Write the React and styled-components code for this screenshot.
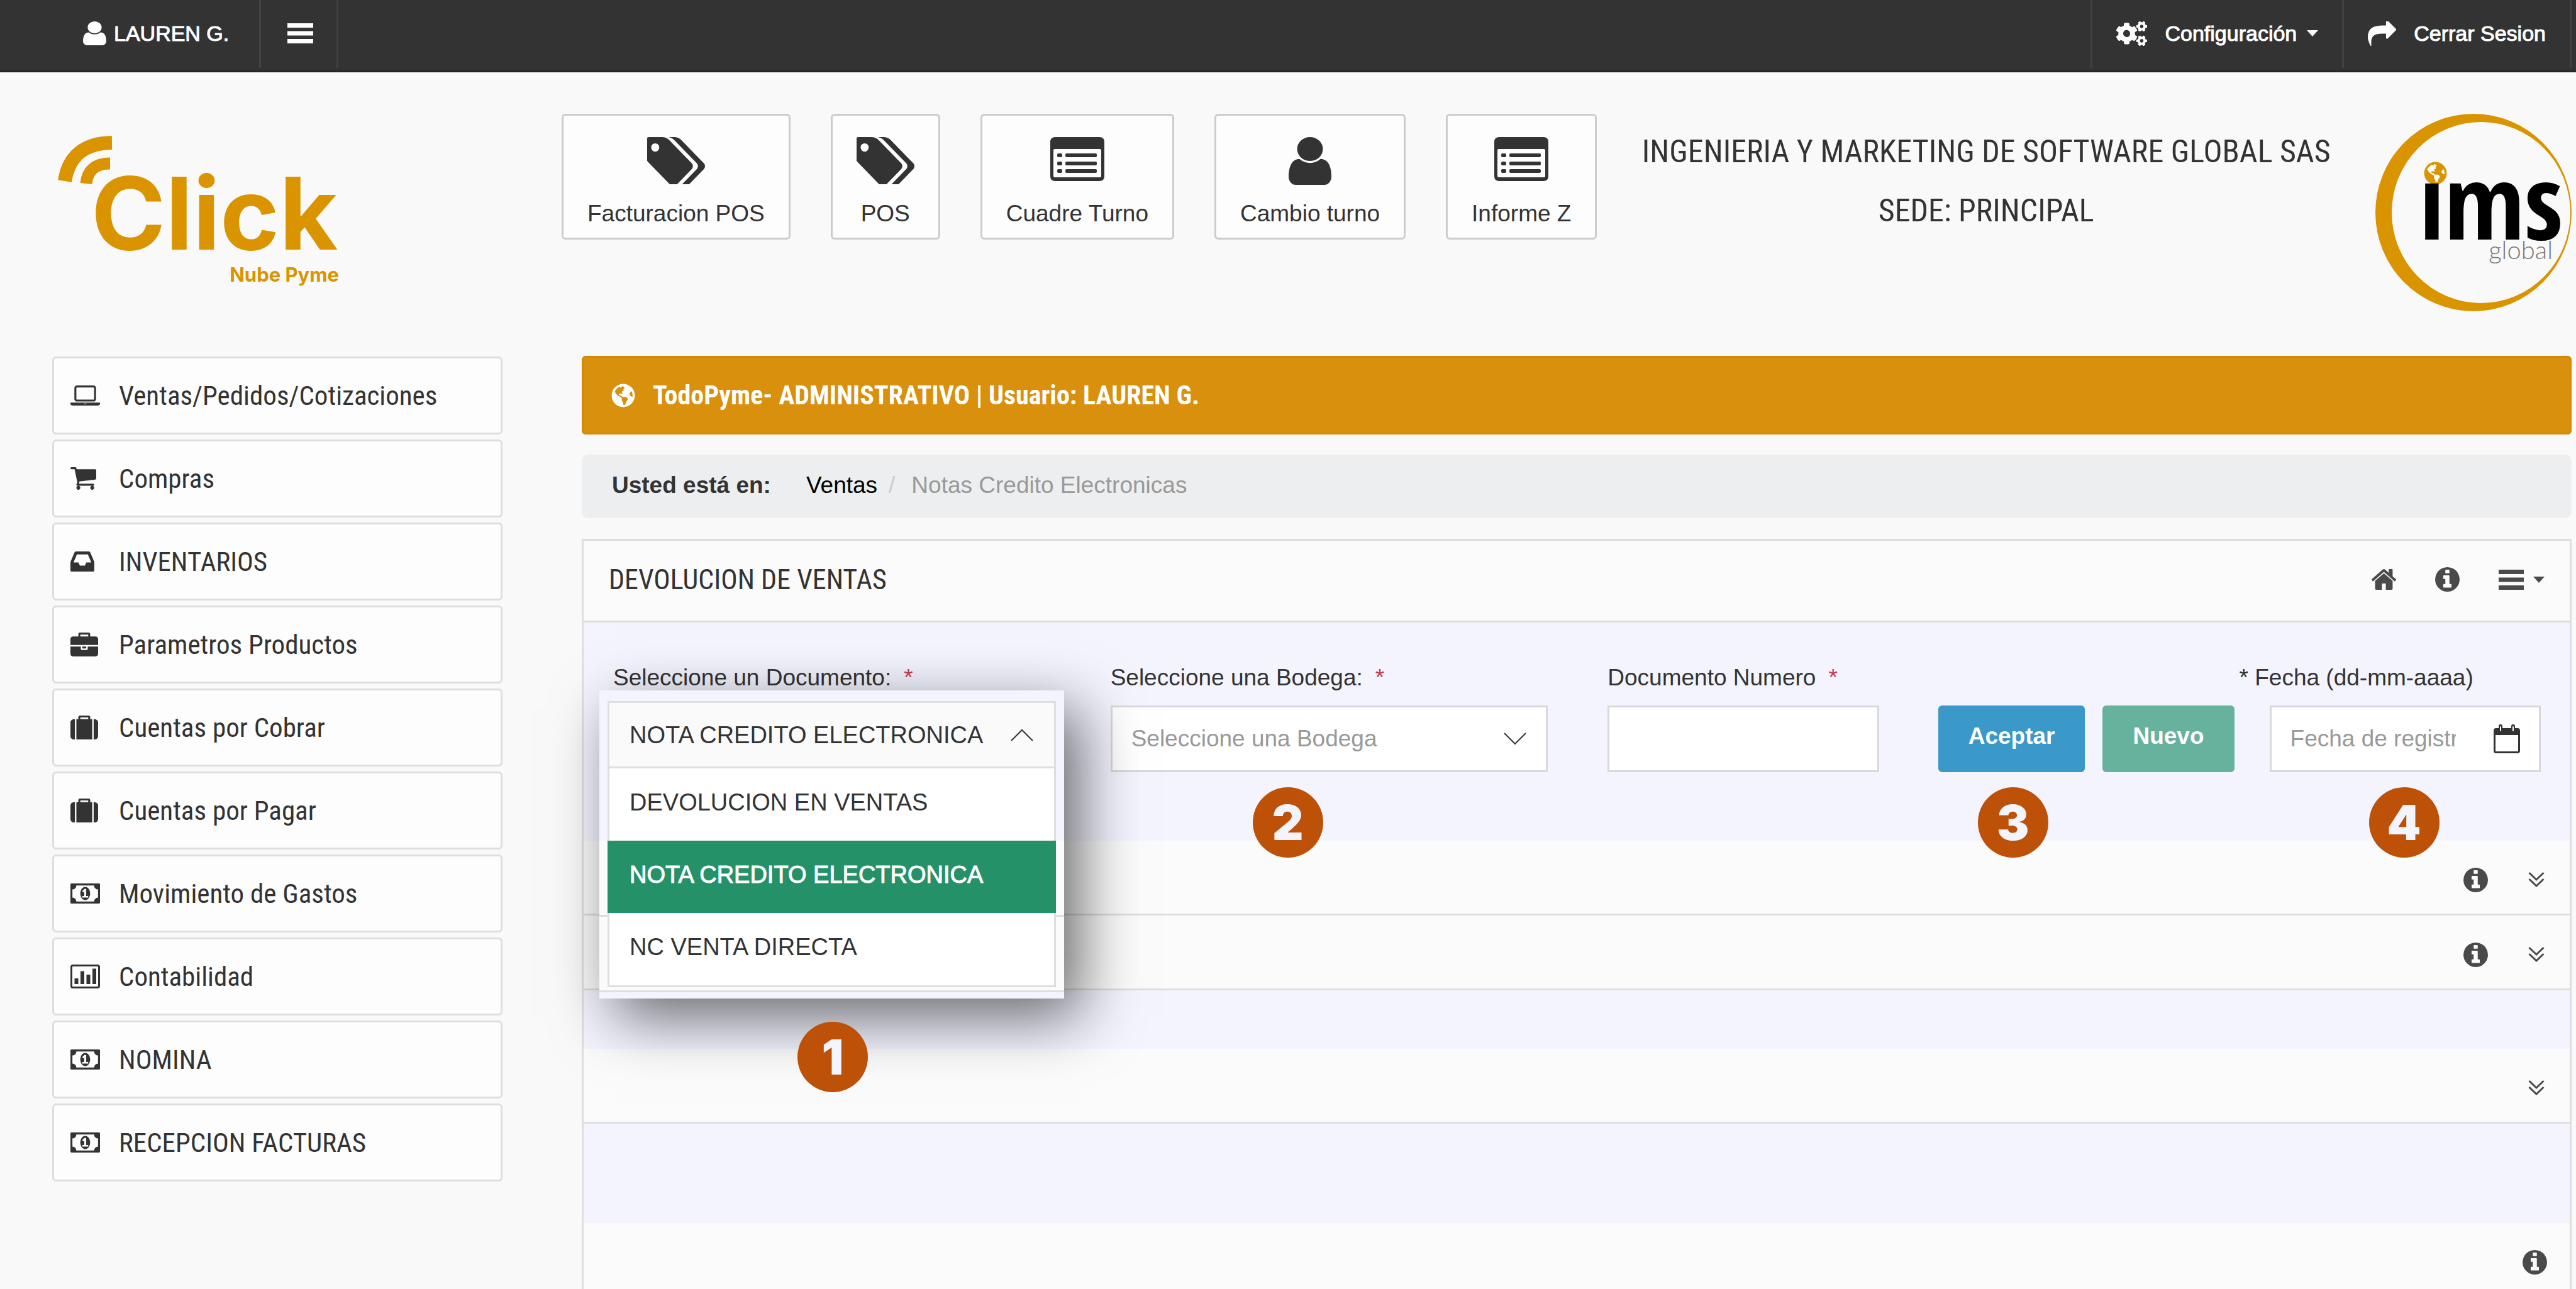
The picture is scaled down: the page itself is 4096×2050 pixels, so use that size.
import React, { useState } from "react";
import styled, { createGlobalStyle } from "styled-components";
import { FaCogs, FaGlobeAmericas } from "react-icons/fa";

const sans = '"Liberation Sans", Arial, sans-serif';
const condensed = '"Roboto Condensed", Roboto, "Liberation Sans", sans-serif';
const line = "#dedede";
const ink = "#333333";
const gold = "#da9400";

const GlobalStyle = createGlobalStyle`
  *, *::before, *::after { box-sizing: border-box; }
  body {
    margin: 0;
    background: #f9f9f9;
    color: ${ink};
    font: 37px/44px ${sans};
  }
  ul { list-style: none; margin: 0; padding: 0; }
  a { color: inherit; text-decoration: none; }
  button, input, select { font: inherit; color: inherit; margin: 0; border-radius: 0; }
  button { cursor: pointer; }
  svg { display: block; flex: none; }
`;

const Page = styled.div`
  display: flex;
  flex-direction: column;
  min-height: 100vh;
`;

/* ---------- icons ---------- */

const Icon = ({ box, w, h, children }) => (
  <svg viewBox={box} width={w} height={h} preserveAspectRatio="none" fill="currentColor" aria-hidden="true">
    {children}
  </svg>
);

const UserIcon = ({ w, h }) => (
  <Icon box="256 128 1280 1536" w={w} h={h}>
    <path d="M1536 1399q0 109-62.5 187t-150.5 78h-854q-88 0-150.5-78t-62.5-187q0-85 8.5-160.5t31.5-152 58.5-131 94-89 134.5-34.5q131 128 313 128t313-128q76 0 134.5 34.5t94 89 58.5 131 31.5 152 8.5 160.5zm-256-887q0 159-112.5 271.5t-271.5 112.5-271.5-112.5-112.5-271.5 112.5-271.5 271.5-112.5 271.5 112.5 112.5 271.5z" />
  </Icon>
);
const BarsIcon = ({ w, h }) => (
  <Icon box="0 0 44 32" w={w} h={h}>
    <path d="M0 0h44v7H0zM0 12.5h44v7H0zM0 25h44v7H0z" />
  </Icon>
);
const CaretIcon = () => (
  <Icon box="0 0 18 10" w={18} h={10}>
    <path d="M0 0h18l-9 10z" />
  </Icon>
);
const ShareIcon = () => (
  <Icon box="0 128 1792 1536" w={45} h={39}>
    <path d="M1792 640q0 26-19 45l-512 512q-19 19-45 19t-45-19-19-45v-256h-224q-98 0-175.5 6t-154 21.5-133 42.5-105.5 69.5-80 101-48.5 138.5-17.5 181q0 55 5 123 0 6 2.5 23.5t2.5 26.5q0 15-8.5 25t-23.5 10q-16 0-28-17-7-9-13-22t-13.5-30-10.5-24q-127-285-127-451 0-199 53-333 162-403 875-403h224v-256q0-26 19-45t45-19 45 19l512 512q19 19 19 45z" />
  </Icon>
);
const TagsIcon = () => (
  <Icon box="0 256 1835 1451" w={92} h={75}>
    <path d="M448 576q0-53-37.5-90.5t-90.5-37.5-90.5 37.5-37.5 90.5 37.5 90.5 90.5 37.5 90.5-37.5 37.5-90.5zm1067 576q0 53-37 90l-491 492q-39 37-91 37-53 0-90-37l-715-716q-38-37-64.5-101t-26.5-117v-416q0-52 38-90t90-38h416q53 0 117 26.5t102 64.5l715 714q37 39 37 91zm384 0q0 53-37 90l-491 492q-39 37-91 37-36 0-59-14t-53-45l470-470q37-37 37-90 0-52-37-91l-715-714q-38-38-102-64.5t-117-26.5h224q53 0 117 26.5t102 64.5l715 714q37 39 37 91z" transform="translate(-64 0)" />
  </Icon>
);
const ListIcon = () => (
  <Icon box="0 0 86 70" w={86} h={70}>
    <path
      fillRule="evenodd"
      d="M8 0h70q8 0 8 8v54q0 8-8 8H8q-8 0-8-8V8q0-8 8-8zM7 19q-2 0-2 2v41q0 2 2 2h72q2 0 2-2V21q0-2-2-2zM13 26h4q2 0 2 2v2q0 2-2 2h-4q-2 0-2-2v-2q0-2 2-2zM13 39h4q2 0 2 2v2q0 2-2 2h-4q-2 0-2-2v-2q0-2 2-2zM13 51h4q2 0 2 2v2q0 2-2 2h-4q-2 0-2-2v-2q0-2 2-2zM26 26h46q2 0 2 2v2q0 2-2 2H26q-2 0-2-2v-2q0-2 2-2zM26 39h46q2 0 2 2v2q0 2-2 2H26q-2 0-2-2v-2q0-2 2-2zM26 51h46q2 0 2 2v2q0 2-2 2H26q-2 0-2-2v-2q0-2 2-2z"
    />
  </Icon>
);
const LaptopIcon = () => (
  <Icon box="0 256 1920 1280" w={47} h={32}>
    <path d="M416 1280q-66 0-113-47t-47-113v-704q0-66 47-113t113-47h1088q66 0 113 47t47 113v704q0 66-47 113t-113 47h-1088zm-32-864v704q0 13 9.5 22.5t22.5 9.5h1088q13 0 22.5-9.5t9.5-22.5v-704q0-13-9.5-22.5t-22.5-9.5h-1088q-13 0-22.5 9.5t-9.5 22.5zm1376 928h160v96q0 40-47 68t-113 28h-1600q-66 0-113-28t-47-68v-96h1760zm-720 96q16 0 16-16t-16-16h-160q-16 0-16 16t16 16h160z" />
  </Icon>
);
const CartIcon = () => (
  <Icon box="64 256 1664 1408" w={41} h={36}>
    <path d="M704 1536q0 52-38 90t-90 38-90-38-38-90 38-90 90-38 90 38 38 90zm896 0q0 52-38 90t-90 38-90-38-38-90 38-90 90-38 90 38 38 90zm128-1088v512q0 24-16.5 42.5t-40.5 21.5l-1044 122q13 60 13 70 0 16-24 64h920q26 0 45 19t19 45-19 45-45 19h-1024q-26 0-45-19t-19-45q0-11 8-31.5t16-36 21.5-40 15.5-29.5l-177-823h-204q-26 0-45-19t-19-45 19-45 45-19h256q16 0 28.5 6.5t19.5 15.5 13 24.5 8 26 5.5 29.5 4.5 26h1201q26 0 45 19t19 45z" />
  </Icon>
);
const InboxIcon = () => (
  <Icon box="128 256 1536 1280" w={38} h={32}>
    <path d="M1151 960h316q-1-3-2.5-8.5t-2.5-7.5l-212-496h-708l-212 496q-1 3-2.5 8.5t-2.5 7.5h316l95 192h320zm513 30v482q0 26-19 45t-45 19h-1408q-26 0-45-19t-19-45v-482q0-62 25-123l238-552q10-25 36.5-42t52.5-17h832q26 0 52.5 17t36.5 42l238 552q25 61 25 123z" />
  </Icon>
);
const BriefcaseIcon = () => (
  <Icon box="0 0 1792 1536" w={44} h={38}>
    <path d="M640 256h512v-128h-512v128zm1152 640v480q0 66-47 113t-113 47h-1472q-66 0-113-47t-47-113v-480h672v160q0 26 19 45t45 19h320q26 0 45-19t19-45v-160h672zm-768 0v128h-256v-128h256zm768-480v384h-1792v-384q0-66 47-113t113-47h352v-160q0-40 28-68t68-28h576q40 0 68 28t28 68v160h352q66 0 113 47t47 113z" />
  </Icon>
);
const SuitcaseIcon = () => (
  <Icon box="0 0 1792 1664" w={44} h={38}>
    <path d="M640 256h512v-128h-512v128zm-352 0v1408h-64q-92 0-158-66t-66-158v-960q0-92 66-158t158-66h64zm1120 0v1408h-1024v-1408h128v-160q0-40 28-68t68-28h576q40 0 68 28t28 68v160h128zm384 224v960q0 92-66 158t-158 66h-64v-1408h64q92 0 158 66t66 158z" />
  </Icon>
);
const MoneyIcon = () => (
  <Icon box="0 256 1920 1280" w={47} h={32}>
    <path
      fillRule="evenodd"
      d="M768 1152h384v-96h-128v-448h-114l-148 137 77 80q42-37 55-57h2v288h-128v96zm512-256q0 70-21 142t-59.5 134-101.5 101-138 39-138-39-101.5-101-59.5-134-21-142 21-142 59.5-134 101.5-101 138-39 138 39 101.5 101 59.5 134 21 142zm512 256v-512q-106 0-181-75t-75-181h-1152q0 106-75 181t-181 75v512q106 0 181 75t75 181h1152q0-106 75-181t181-75zm128-832v1152q0 26-19 45t-45 19h-1792q-26 0-45-19t-19-45v-1152q0-26 19-45t45-19h1792q26 0 45 19t19 45z"
    />
  </Icon>
);
const ChartIcon = () => (
  <Icon box="0 0 47 38" w={47} h={38}>
    <path
      fillRule="evenodd"
      d="M4 0h39q4 0 4 4v30q0 4-4 4H4q-4 0-4-4V4q0-4 4-4zM4 3q-1 0-1 1v30q0 1 1 1h39q1 0 1-1V4q0-1-1-1zM6.5 22h6v9h-6zM16 10.5h6V31h-6zM25.5 16h6v15h-6zM35 6.5h6V31h-6z"
    />
  </Icon>
);
const HomeIcon = () => (
  <Icon box="89 253 1614 1283" w={39} h={33}>
    <path d="M1472 992v480q0 26-19 45t-45 19h-384v-384h-256v384h-384q-26 0-45-19t-19-45v-480q0-1 .5-3t.5-3l575-474 575 474q1 2 1 6zm223-69l-62 74q-8 9-21 11h-3q-13 0-21-7l-692-577-692 577q-12 8-24 7-13-2-21-11l-62-74q-8-10-7-23.5t11-21.5l719-599q32-26 76-26t76 26l244 204v-195q0-14 9-23t23-9h192q14 0 23 9t9 23v408l219 182q10 8 11 21.5t-7 23.5z" />
  </Icon>
);
const InfoIcon = () => (
  <Icon box="128 128 1536 1536" w={39} h={39}>
    <path d="M1152 1376v-160q0-14-9-23t-23-9h-96v-512q0-14-9-23t-23-9h-320q-14 0-23 9t-9 23v160q0 14 9 23t23 9h96v320h-96q-14 0-23 9t-9 23v160q0 14 9 23t23 9h448q14 0 23-9t9-23zm-128-896v-160q0-14-9-23t-23-9h-192q-14 0-23 9t-9 23v160q0 14 9 23t23 9h192q14 0 23-9t9-23zm640 416q0 209-103 385.5t-279.5 279.5-385.5 103-385.5-103-279.5-279.5-103-385.5 103-385.5 279.5-279.5 385.5-103 385.5 103 279.5 279.5 103 385.5z" />
  </Icon>
);
const Stroke = ({ box, w, h, d, width }) => (
  <svg viewBox={box} width={w} height={h} fill="none" stroke="currentColor" strokeWidth={width} aria-hidden="true">
    <path d={d} />
  </svg>
);
const DoubleDown = () => <Stroke box="0 0 26 26" w={26} h={26} width={3} d="M1.5 2l11.5 11 11.5-11M1.5 12l11.5 11 11.5-11" />;
const ChevronDown = () => <Stroke box="0 0 38 22" w={38} h={22} width={2} d="M2 2l17 17 17-17" />;
const ChevronUp = () => <Stroke box="0 0 38 22" w={38} h={22} width={2} d="M2 20l17-17 17 17" />;
const CalendarIcon = () => (
  <Icon box="0 0 42 46" w={42} h={46}>
    <path
      fillRule="evenodd"
      d="M4 6h4V3q0-3 3-3t3 3v3h14V3q0-3 3-3t3 3v3h4q4 0 4 4v32q0 4-4 4H4q-4 0-4-4V10q0-4 4-4zM3 17v25q0 1 1 1h34q1 0 1-1V17zM10 4v6q0 1 1 1t1-1V4q0-1-1-1t-1 1zM30 4v6q0 1 1 1t1-1V4q0-1-1-1t-1 1z"
    />
  </Icon>
);

const ClickLogo = () => (
  <svg viewBox="0 0 460 250" width={460} height={250} role="img" aria-label="Click Nube Pyme">
    <g fill="none" stroke={gold}>
      <path strokeWidth="22" d="M13 76Q22 16 88 15" />
      <path strokeWidth="19" d="M47 80Q50 48 85 48" />
    </g>
    <text x="55" y="185" fill={gold} fontFamily="Inter, sans-serif" fontWeight="700" fontSize="160">
      Click
    </text>
    <text x="449" y="236" textAnchor="end" fill={gold} fontFamily="Inter, sans-serif" fontWeight="700" fontSize="31">
      Nube Pyme
    </text>
  </svg>
);

const ImsLogo = () => (
  <svg viewBox="0 0 312 314" width={312} height={314} role="img" aria-label="ims global">
    <path
      fill={gold}
      fillRule="evenodd"
      d="M156 0a156 157 0 1 1 0 314a156 157 0 1 1 0-314zM168 13a142 144 0 1 0 0 288a142 144 0 1 0 0-288z"
    />
    <g color={gold}>
      <FaGlobeAmericas x="77" y="76" width="30" height="30" />
    </g>
    <text x="70" y="200" fill="#000" fontFamily='"Open Sans Condensed", "Roboto Condensed", sans-serif' fontWeight="700" fontSize="164">
      ıms
    </text>
    <text x="282" y="231" textAnchor="end" fill="#777" fontFamily="Lato, sans-serif" fontWeight="300" fontSize="40">
      global
    </text>
  </svg>
);

/* ---------- top bar ---------- */

const TopBar = styled.nav`
  display: flex;
  align-items: flex-start;
  justify-content: space-between;
  height: 115px;
  padding: 0 7px 0 84px;
  background: #333333;
  border-bottom: 3px solid #262626;
  color: #ffffff;
`;
const TopGroup = styled.ul`
  display: flex;
`;
const TopItem = styled.li`
  border-right: 3px solid #424242;
`;
const TopRight = styled(TopGroup)`
  border-left: 3px solid #424242;
`;
const TopLink = styled.a`
  display: flex;
  align-items: center;
  height: 108px;
  padding: 0 ${(p) => p.$pad || 38}px 2px;
  gap: ${(p) => p.$gap || 28}px;
  font-size: 34px;
  -webkit-text-stroke: 1px currentColor;
`;
const TopButton = styled.button`
  display: flex;
  align-items: center;
  height: 108px;
  padding: 0 37px 2px 42px;
  border: 0;
  background: none;
`;
const WithCaret = styled.span`
  display: flex;
  align-items: center;
  gap: 16px;
`;

/* ---------- header ---------- */

const Header = styled.header`
  display: flex;
  align-items: flex-start;
  gap: 64px;
  height: 451px;
  padding: 66px 7px 0 83px;
`;
const Brand = styled.a`
  flex: none;
  width: 746px;
  padding: 31px 0 0 7px;
`;
const Shortcuts = styled.nav`
  display: flex;
  gap: 64px;
`;
const Shortcut = styled.a`
  display: flex;
  flex-direction: column;
  align-items: center;
  justify-content: space-between;
  height: 200px;
  padding: 34px 38px 16px;
  border: 3px solid #cccccc;
  border-radius: 6px;
  background: #fdfdfd;
  white-space: nowrap;
`;
const Company = styled.h1`
  flex: 1;
  margin: 0;
  padding-top: 13px;
  font: 400 50px/94px ${condensed};
  text-align: center;
  white-space: nowrap;
`;

/* ---------- body ---------- */

const Columns = styled.div`
  display: flex;
  flex: 1;
  gap: 126px;
  padding: 0 7px 0 83px;
`;
const Sidebar = styled.nav`
  width: 716px;
  flex: none;
`;
const MenuList = styled.ul`
  display: flex;
  flex-direction: column;
  gap: 8px;
  padding-top: 1px;
`;
const MenuLink = styled.a`
  display: grid;
  grid-template-columns: 47px 1fr;
  align-items: center;
  column-gap: 30px;
  height: 124px;
  padding: 0 26px;
  border: 3px solid ${line};
  border-radius: 6px;
  background: #fdfdfd;
  font-family: ${condensed};
  font-size: 43px;
`;
const Main = styled.main`
  display: flex;
  flex-direction: column;
  flex: 1;
  min-width: 0;
`;
const Banner = styled.div`
  display: flex;
  align-items: center;
  gap: 28px;
  height: 125px;
  padding: 0 44px;
  border: 3px solid #d48904;
  border-radius: 6px;
  background: #d9900d;
  color: #ffffff;
  font: 700 42px/50px ${condensed};
`;
const Crumbs = styled.ol`
  display: flex;
  align-items: center;
  height: 101px;
  margin: 32px 0 33px;
  padding: 0 48px 4px;
  border-radius: 10px;
  background: #eceeef;
  list-style: none;
`;
const CrumbTitle = styled.strong`
  margin-right: 56px;
`;
const Crumb = styled.li`
  color: #999999;
`;
const CrumbLink = styled.a`
  color: #000000;
  &::after {
    content: "/";
    padding: 0 26px 0 18px;
    color: #cccccc;
  }
`;

/* ---------- panel ---------- */

const Panel = styled.section`
  display: flex;
  flex-direction: column;
  flex: 1;
  border: 3px solid ${line};
  border-bottom: 0;
  background: #f4f4ff;
`;
const PanelHead = styled.header`
  display: flex;
  align-items: center;
  justify-content: space-between;
  height: 130px;
  padding: 0 40px 4px;
  border-bottom: 3px solid ${line};
  background: #fbfbfb;
`;
const PanelTitle = styled.h2`
  margin: 0;
  font: 400 44px/52px ${condensed};
`;
const Tools = styled.div`
  display: flex;
  align-items: center;
  gap: 62px;
  color: #4a4a4a;
`;
const ToolButton = styled.button`
  display: flex;
  align-items: center;
  gap: 15px;
  padding: 0;
  border: 0;
  background: none;
`;
const Band = styled.div`
  display: flex;
  align-items: center;
  justify-content: flex-end;
  gap: 64px;
  height: 119px;
  padding: 8px 40px 0;
  border-bottom: 3px solid ${line};
  background: #fbfbfb;
  color: #4a4a4a;
`;
const LastBand = styled(Band)`
  align-items: flex-start;
  flex: 1;
  height: auto;
  padding: 43px 36px 0;
  border-bottom: 0;
`;
const Gap = styled.div`
  height: ${(p) => p.$height}px;
`;

const Form = styled.form`
  display: flex;
  align-items: flex-start;
  height: 347px;
  padding: 66px 46px 0 47px;
`;
const Field = styled.div`
  position: relative;
  display: flex;
  flex-direction: column;
  gap: 22px;
  flex: ${(p) => p.$grow} ${(p) => p.$grow} 0;
  min-width: 0;
  margin-right: ${(p) => p.$after || 0}px;
`;
const Label = styled.label`
  white-space: nowrap;
`;
const Star = styled.span`
  padding-left: 20px;
  color: #c43c50;
`;
const Control = styled.div`
  display: flex;
  align-items: center;
  justify-content: space-between;
  height: 106px;
  padding: 0 30px;
  margin-left: ${(p) => p.$indent || 0}px;
  border: 3px solid #d8d8d8;
  background: #ffffff;
  color: ${(p) => (p.$muted ? "#999999" : ink)};
`;
const Caret = styled.span`
  color: ${ink};
  pointer-events: none;
`;
const Select = styled.select`
  flex: 1;
  min-width: 0;
  height: 100%;
  padding: 0;
  border: 0;
  outline: 0;
  appearance: none;
  background: none;
`;
const Input = styled.input`
  flex: 1;
  min-width: 0;
  height: 100%;
  padding: 0;
  border: 0;
  outline: 0;
  background: none;
  &::placeholder { color: #999999; opacity: 1; }
`;
const DateInput = styled(Input)`
  margin-right: 60px;
`;
const Actions = styled.div`
  position: relative;
  display: flex;
  gap: 28px;
  padding-top: 66px;
  margin-right: 8px;
`;
const Action = styled.button`
  height: 106px;
  padding: 0 48px 8px;
  border: 0;
  border-radius: 6px;
  background: ${(p) => p.$tone};
  color: #ffffff;
  font-weight: 700;
`;

const Raised = styled.div`
  position: absolute;
  z-index: 2;
  left: -22px;
  top: 42px;
  width: 739px;
  height: 490px;
  padding: 17px 13px;
  background: linear-gradient(
    #f4f4ff 239px, #fbfbfb 239px 357px, ${line} 357px 360px,
    #fbfbfb 360px 477px, ${line} 477px 480px, #f4f4ff 480px
  );
  box-shadow: 25px 30px 90px rgba(0, 0, 0, 0.58);
  font-size: 38px;
`;
const OpenSelect = styled.div`
  display: flex;
  align-items: center;
  height: 107px;
  padding: 0 32px;
  border: 3px solid ${line};
  background: #fafafa;
`;
const Options = styled.ul`
  border: 3px solid ${line};
  border-top: 0;
  background: #ffffff;
`;
const Option = styled.button`
  display: block;
  width: ${(p) => (p.$active ? "calc(100% + 6px)" : "100%")};
  height: 115px;
  margin: 0 ${(p) => (p.$active ? "-3px" : "0")};
  padding: 0 ${(p) => (p.$active ? "35px" : "32px")} 8px;
  border: 0;
  background: ${(p) => (p.$active ? "#249169" : "#ffffff")};
  color: ${(p) => (p.$active ? "#ffffff" : ink)};
  -webkit-text-stroke: ${(p) => (p.$active ? "1px currentColor" : "0")};
  text-align: left;
`;
const Badge = styled.span`
  position: absolute;
  z-index: 3;
  left: ${(p) => p.$x}px;
  top: ${(p) => p.$y}px;
  width: 112px;
  height: 112px;
  border-radius: 50%;
  background: #be5108;
  color: #f4f4ff;
  font: 900 77px/112px Inter, sans-serif;
  text-align: center;
`;

const shortcuts = [
  ["Facturacion POS", <TagsIcon />],
  ["POS", <TagsIcon />],
  ["Cuadre Turno", <ListIcon />],
  ["Cambio turno", <UserIcon w={68} h={76} />],
  ["Informe Z", <ListIcon />],
];
const menu = [
  ["Ventas/Pedidos/Cotizaciones", <LaptopIcon />],
  ["Compras", <CartIcon />],
  ["INVENTARIOS", <InboxIcon />],
  ["Parametros Productos", <BriefcaseIcon />],
  ["Cuentas por Cobrar", <SuitcaseIcon />],
  ["Cuentas por Pagar", <SuitcaseIcon />],
  ["Movimiento de Gastos", <MoneyIcon />],
  ["Contabilidad", <ChartIcon />],
  ["NOMINA", <MoneyIcon />],
  ["RECEPCION FACTURAS", <MoneyIcon />],
];
const documents = ["DEVOLUCION EN VENTAS", "NOTA CREDITO ELECTRONICA", "NC VENTA DIRECTA"];

export default function App() {
  const [doc, setDoc] = useState(documents[1]);
  return (
    <Page>
      <GlobalStyle />
      <TopBar>
        <TopGroup>
          <TopItem>
            <TopLink href="#perfil" $pad={48} $gap={12}>
              <UserIcon w={37} h={38} />
              LAUREN G.
            </TopLink>
          </TopItem>
          <TopItem>
            <TopButton type="button" aria-label="Menú">
              <BarsIcon w={41} h={32} />
            </TopButton>
          </TopItem>
        </TopGroup>
        <TopRight>
          <TopItem>
            <TopLink href="#configuracion">
              <FaCogs size={49} />
              <WithCaret>
                Configuración <CaretIcon />
              </WithCaret>
            </TopLink>
          </TopItem>
          <TopItem>
            <TopLink href="#salir">
              <ShareIcon />
              Cerrar Sesion
            </TopLink>
          </TopItem>
        </TopRight>
      </TopBar>

      <Header>
        <Brand href="#inicio">
          <ClickLogo />
        </Brand>
        <Shortcuts>
          {shortcuts.map(([name, icon]) => (
            <Shortcut key={name} href="#acceso">
              {icon}
              {name}
            </Shortcut>
          ))}
        </Shortcuts>
        <Company>
          INGENIERIA Y MARKETING DE SOFTWARE GLOBAL SAS
          <br />
          SEDE: PRINCIPAL
        </Company>
        <ImsLogo />
      </Header>

      <Columns>
        <Sidebar>
          <MenuList>
            {menu.map(([name, icon]) => (
              <li key={name}>
                <MenuLink href="#menu">
                  {icon}
                  {name}
                </MenuLink>
              </li>
            ))}
          </MenuList>
        </Sidebar>

        <Main>
          <Banner>
            <FaGlobeAmericas size={38} />
            TodoPyme- ADMINISTRATIVO | Usuario: LAUREN G.
          </Banner>
          <Crumbs>
            <CrumbTitle>Usted está en:</CrumbTitle>
            <Crumb>
              <CrumbLink href="#ventas">Ventas</CrumbLink>
            </Crumb>
            <Crumb>Notas Credito Electronicas</Crumb>
          </Crumbs>

          <Panel>
            <PanelHead>
              <PanelTitle>DEVOLUCION DE VENTAS</PanelTitle>
              <Tools>
                <ToolButton type="button" aria-label="Inicio">
                  <HomeIcon />
                </ToolButton>
                <ToolButton type="button" aria-label="Información">
                  <InfoIcon />
                </ToolButton>
                <ToolButton type="button" aria-label="Opciones">
                  <BarsIcon w={40} h={32} />
                  <CaretIcon />
                </ToolButton>
              </Tools>
            </PanelHead>

            <Form onSubmit={(e) => e.preventDefault()}>
              <Field $grow={695} $after={95}>
                <Label htmlFor="documento">
                  Seleccione un Documento:<Star>*</Star>
                </Label>
                <Raised>
                  <OpenSelect>
                    <Select id="documento" value={doc} onChange={(e) => setDoc(e.target.value)}>
                      {documents.map((d) => (
                        <option key={d}>{d}</option>
                      ))}
                    </Select>
                    <Caret>
                      <ChevronUp />
                    </Caret>
                  </OpenSelect>
                  <Options>
                    {documents.map((d) => (
                      <li key={d}>
                        <Option type="button" $active={d === doc} onClick={() => setDoc(d)}>
                          {d}
                        </Option>
                      </li>
                    ))}
                  </Options>
                </Raised>
                <Badge $x={293} $y={569}>1</Badge>
              </Field>

              <Field $grow={695} $after={95}>
                <Label htmlFor="bodega">
                  Seleccione una Bodega:<Star>*</Star>
                </Label>
                <Control $muted>
                  <Select id="bodega" defaultValue="">
                    <option value="">Seleccione una Bodega</option>
                  </Select>
                  <Caret>
                    <ChevronDown />
                  </Caret>
                </Control>
                <Badge $x={226} $y={196}>2</Badge>
              </Field>

              <Field $grow={431} $after={94}>
                <Label htmlFor="numero">
                  Documento Numero<Star>*</Star>
                </Label>
                <Control>
                  <Input id="numero" type="text" />
                </Control>
              </Field>

              <Actions>
                <Action type="submit" $tone="#3b99c9">Aceptar</Action>
                <Action type="button" $tone="#67b29c">Nuevo</Action>
                <Badge $x={63} $y={196}>3</Badge>
              </Actions>

              <Field $grow={479}>
                <Label htmlFor="fecha">* Fecha (dd-mm-aaaa)</Label>
                <Control $indent={48}>
                  <DateInput id="fecha" type="text" placeholder="Fecha de registro" />
                  <Caret>
                    <CalendarIcon />
                  </Caret>
                </Control>
                <Badge $x={206} $y={196}>4</Badge>
              </Field>
            </Form>

            <Band>
              <InfoIcon />
              <DoubleDown />
            </Band>
            <Band>
              <InfoIcon />
              <DoubleDown />
            </Band>
            <Gap $height={93} />
            <Band>
              <DoubleDown />
            </Band>
            <Gap $height={158} />
            <LastBand>
              <InfoIcon />
            </LastBand>
          </Panel>
        </Main>
      </Columns>
    </Page>
  );
}
